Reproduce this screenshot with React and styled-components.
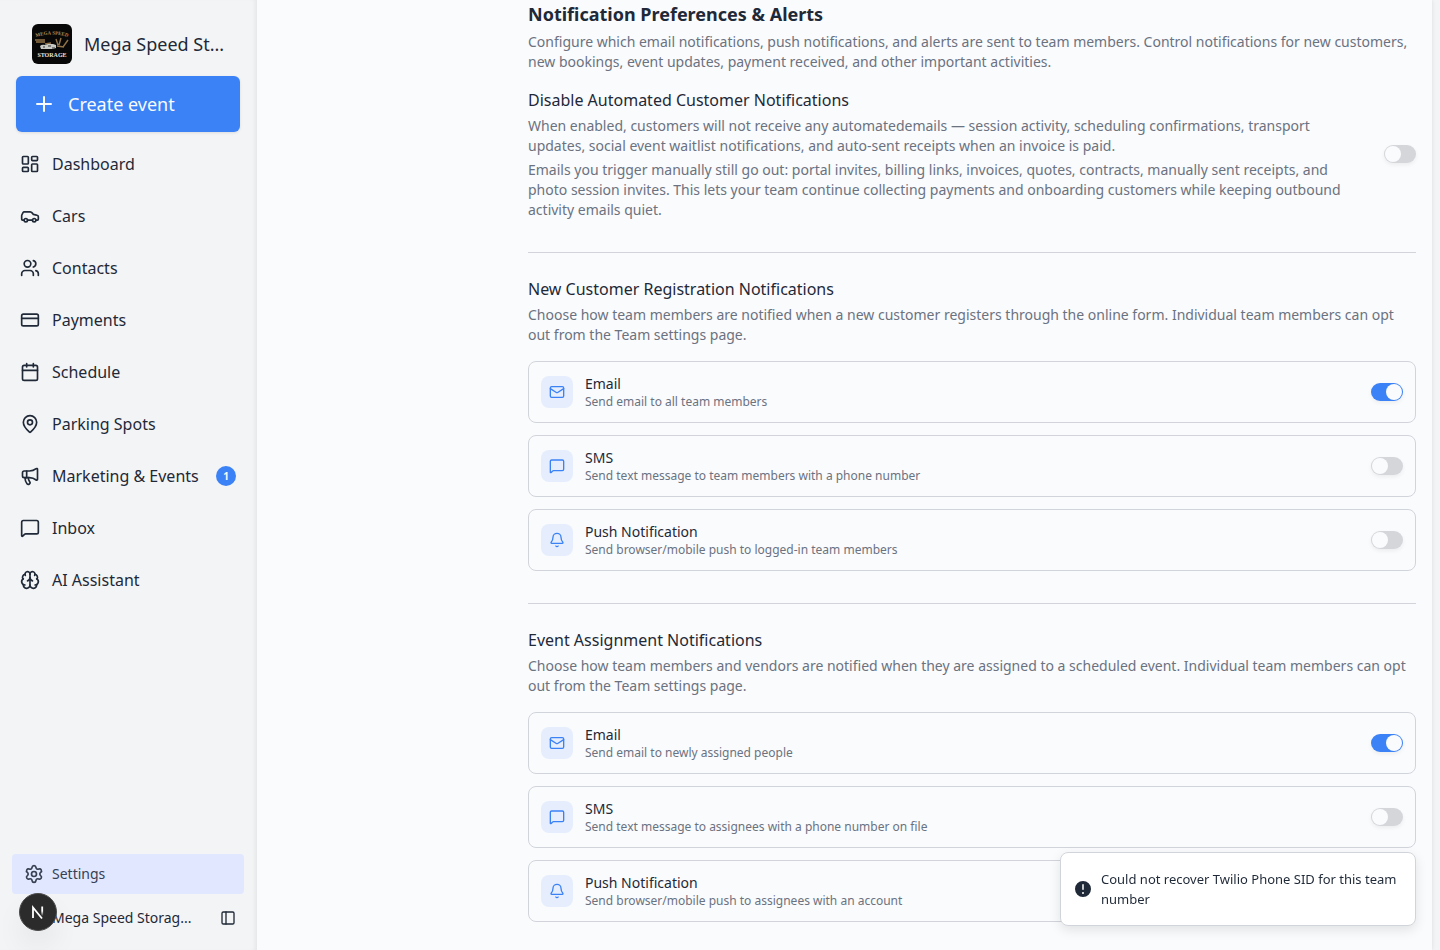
import styled, { createGlobalStyle } from "styled-components";
import { useId, useState } from "react";
import {
  Bell,
  Brain,
  Calendar,
  Car,
  CreditCard,
  LayoutDashboard,
  Mail,
  MapPin,
  Megaphone,
  MessageSquare,
  PanelLeft,
  Plus,
  Settings,
  Users,
} from "lucide-react";

const GlobalStyle = createGlobalStyle`
  *, *::before, *::after {
    box-sizing: border-box;
  }
  body {
    margin: 0;
    background: #f3f4f6;
    color: #1f2937;
    font-family: "Noto Sans", sans-serif;
    font-size: 14px;
    line-height: 20px;
  }
  h2, h3, p {
    margin: 0;
  }
  a {
    color: inherit;
    text-decoration: none;
  }
  button {
    font-family: inherit;
    cursor: pointer;
  }
`;

const Layout = styled.div`
  display: flex;
  align-items: flex-start;
  min-height: 100vh;
  padding-right: 8px;
`;

const Sidebar = styled.aside`
  position: sticky;
  top: 0;
  display: flex;
  flex-direction: column;
  flex: none;
  width: 257px;
  height: 100vh;
  padding-top: 24px;
  background: #f3f4f6;
  box-shadow: inset -4px 0 4px -2px rgba(0, 0, 0, 0.06);
`;

const Brand = styled.div`
  display: flex;
  align-items: center;
  gap: 12px;
  padding: 0 24px 0 32px;

  svg {
    flex: none;
  }
`;

const BrandName = styled.span`
  font-size: 18px;
  line-height: 28px;
  white-space: nowrap;
`;

const CreateButton = styled.button`
  display: flex;
  flex: none;
  align-items: center;
  gap: 12px;
  height: 56px;
  margin: 12px 17px 12px 16px;
  padding: 0 16px;
  border: none;
  border-radius: 6px;
  background: #3b82f6;
  color: #f8fafc;
  font-size: 18px;
  line-height: 28px;
  box-shadow: 0 1px 3px rgba(0, 0, 0, 0.1);
`;

const Nav = styled.nav`
  display: flex;
  flex-direction: column;
  gap: 12px;
  padding: 0 13px 0 12px;
`;

const NavLink = styled.a`
  display: flex;
  align-items: center;
  gap: 12px;
  height: 40px;
  padding: 0 8px;
  border-radius: 6px;
  font-size: 16px;
`;

const Badge = styled.span`
  width: 20px;
  height: 20px;
  margin-left: auto;
  border-radius: 50%;
  background: #3b82f6;
  color: #f8fafc;
  font-size: 10px;
  font-weight: 700;
  line-height: 20px;
  text-align: center;
`;

const SidebarFooter = styled.div`
  margin-top: auto;
  padding: 0 13px 8px 12px;
`;

const SettingsLink = styled.a`
  display: flex;
  align-items: center;
  gap: 8px;
  height: 40px;
  padding: 0 12px;
  border-radius: 4px;
  background: #e0e7ff;
  color: #374151;
`;

const Account = styled.div`
  display: flex;
  align-items: center;
  justify-content: space-between;
  height: 48px;
  padding: 0 8px 0 40px;
`;

const AccountName = styled.span`
  white-space: nowrap;
`;

const IconButton = styled.button`
  display: flex;
  padding: 0;
  border: none;
  background: none;
  color: #1f2937;
`;

const DevButton = styled.button`
  position: fixed;
  bottom: 19px;
  left: 19px;
  display: flex;
  align-items: center;
  justify-content: center;
  width: 38px;
  height: 38px;
  padding: 0;
  border: 1px solid #4a4a4a;
  border-radius: 50%;
  background: #2b2b2b;
  box-shadow: 0 16px 32px -8px rgba(0, 0, 0, 0.16);
`;

const Main = styled.main`
  flex: 1;
  min-width: 0;
  min-height: 100vh;
  padding: 0 16px 28px 271px;
  background: #fafbfd;
  box-shadow: 0 0 4px rgba(0, 0, 0, 0.1);
`;

const Title = styled.h2`
  margin-bottom: 4px;
  font-size: 18px;
  font-weight: 700;
  line-height: 28px;
`;

const Heading = styled.h3`
  margin-bottom: 4px;
  font-size: 16px;
  font-weight: 400;
  line-height: 24px;
`;

const Text = styled.p`
  color: #6b7280;

  & + & {
    margin-top: 4px;
  }
`;

const DisableRow = styled.div`
  display: flex;
  align-items: center;
  justify-content: space-between;
  gap: 16px;
  margin-top: 16px;
`;

const Section = styled.section`
  margin-top: 32px;
  padding-top: 24px;
  border-top: 1px solid #d1d5db;
`;

const Options = styled.div`
  display: flex;
  flex-direction: column;
  gap: 12px;
  margin-top: 16px;
`;

const Option = styled.div`
  display: flex;
  align-items: center;
  gap: 12px;
  padding: 12px;
  border: 1px solid #d1d5db;
  border-radius: 8px;
`;

const OptionIcon = styled.span`
  display: flex;
  align-items: center;
  justify-content: center;
  width: 32px;
  height: 32px;
  border-radius: 8px;
  background: #e6eefd;
  color: #3b82f6;
`;

const OptionLabel = styled.label`
  flex: 1;
`;

const OptionHint = styled.span`
  display: block;
  color: #6b7280;
  font-size: 12px;
  line-height: 16px;
`;

const Switch = styled.input`
  flex: none;
  width: 32px;
  height: 18px;
  margin: 0;
  padding: 1px;
  border-radius: 9px;
  background: #d4d6da;
  box-shadow: 0 2px 4px rgba(0, 0, 0, 0.06);
  appearance: none;
  cursor: pointer;

  &::before {
    content: "";
    display: block;
    width: 16px;
    height: 16px;
    border-radius: 50%;
    background: #fafbfd;
  }

  &:checked {
    background: #3b82f6;
  }

  &:checked::before {
    margin-left: auto;
  }
`;

const Toast = styled.div`
  position: fixed;
  right: 24px;
  bottom: 24px;
  display: flex;
  align-items: center;
  gap: 8px;
  width: 356px;
  padding: 16px 12px;
  border: 1px solid #d1d5db;
  border-radius: 8px;
  background: #fff;
  font-size: 13px;
  box-shadow: 0 4px 12px rgba(0, 0, 0, 0.1);

  svg {
    flex: none;
  }
`;

const links = [
  { name: "Dashboard", icon: LayoutDashboard },
  { name: "Cars", icon: Car },
  { name: "Contacts", icon: Users },
  { name: "Payments", icon: CreditCard },
  { name: "Schedule", icon: Calendar },
  { name: "Parking Spots", icon: MapPin },
  { name: "Marketing & Events", icon: Megaphone, count: 1 },
  { name: "Inbox", icon: MessageSquare },
  { name: "AI Assistant", icon: Brain },
];

const sections = [
  {
    title: "New Customer Registration Notifications",
    text: "Choose how team members are notified when a new customer registers through the online form. Individual team members can opt out from the Team settings page.",
    options: [
      { name: "Email", icon: Mail, on: true, hint: "Send email to all team members" },
      { name: "SMS", icon: MessageSquare, hint: "Send text message to team members with a phone number" },
      { name: "Push Notification", icon: Bell, hint: "Send browser/mobile push to logged-in team members" },
    ],
  },
  {
    title: "Event Assignment Notifications",
    text: "Choose how team members and vendors are notified when they are assigned to a scheduled event. Individual team members can opt out from the Team settings page.",
    options: [
      { name: "Email", icon: Mail, on: true, hint: "Send email to newly assigned people" },
      { name: "SMS", icon: MessageSquare, hint: "Send text message to assignees with a phone number on file" },
      { name: "Push Notification", icon: Bell, hint: "Send browser/mobile push to assignees with an account" },
    ],
  },
];

const Logo = () => (
  <svg width="40" height="40" viewBox="0 0 40 40" aria-hidden="true">
    <rect width="40" height="40" rx="6" fill="#080808" />
    <path id="arc" d="M1 14Q20 7 39 14" fill="none" />
    <text fill="#b08d57" fontFamily="Liberation Serif, serif" fontSize="5" fontWeight="700">
      <textPath href="#arc" startOffset="50%" textAnchor="middle">
        MEGA SPEED
      </textPath>
    </text>
    <path d="M3 16h10M4 18h9M13 20l6-1M24 15l2 6M29 14l-2 7M36 16l-5 7M25 22l7 1" stroke="#927347" strokeWidth="1.4" fill="none" />
    <path d="M8 22q2-2 5-1l3-1h5l3 1v3l-3 1H9z" fill="#c9c9c4" />
    <path d="M11 23h2M16 22h3M20 24h3" stroke="#333" strokeWidth="1" />
    <text x="20" y="33" fill="#e5e5e0" fontFamily="Liberation Serif, serif" fontSize="6" fontWeight="700" textAnchor="middle">
      STORAGE
    </text>
  </svg>
);

const NextMark = () => (
  <svg width="16" height="16" viewBox="0 0 16 16" fill="none" aria-hidden="true">
    <defs>
      <linearGradient id="leg" x1="0" y1="2" x2="0" y2="12" gradientUnits="userSpaceOnUse">
        <stop offset="0.5" stopColor="#fff" />
        <stop offset="1" stopColor="#fff" stopOpacity="0" />
      </linearGradient>
    </defs>
    <path d="M3 14V3.5l9 11" stroke="#fff" strokeWidth="1.8" />
    <path d="M12.2 2.5v9.5" stroke="url(#leg)" strokeWidth="1.8" />
  </svg>
);

const ChannelOption = ({ option }) => {
  const [checked, setChecked] = useState(Boolean(option.on));
  const id = useId();
  const Icon = option.icon;

  return (
    <Option>
      <OptionIcon>
        <Icon size={16} />
      </OptionIcon>
      <OptionLabel htmlFor={id}>
        {option.name}
        <OptionHint>{option.hint}</OptionHint>
      </OptionLabel>
      <Switch id={id} type="checkbox" checked={checked} onChange={(e) => setChecked(e.target.checked)} />
    </Option>
  );
};

const App = () => {
  const [disabled, setDisabled] = useState(false);

  return (
    <>
      <GlobalStyle />
      <Layout>
        <Sidebar>
          <Brand>
            <Logo />
            <BrandName>Mega Speed St...</BrandName>
          </Brand>
          <CreateButton type="button">
            <Plus size={24} />
            Create event
          </CreateButton>
          <Nav>
            {links.map(({ name, icon: Icon, count }) => (
              <NavLink href="#" key={name}>
                <Icon size={20} />
                {name}
                {count && <Badge>{count}</Badge>}
              </NavLink>
            ))}
          </Nav>
          <SidebarFooter>
            <SettingsLink href="#">
              <Settings size={20} />
              Settings
            </SettingsLink>
            <Account>
              <AccountName>Mega Speed Storag...</AccountName>
              <IconButton type="button" aria-label="Toggle sidebar">
                <PanelLeft size={16} />
              </IconButton>
            </Account>
          </SidebarFooter>
        </Sidebar>
        <Main>
          <Title>Notification Preferences &amp; Alerts</Title>
          <Text>
            Configure which email notifications, push notifications, and alerts are sent to team members. Control
            notifications for new customers, new bookings, event updates, payment received, and other important
            activities.
          </Text>
          <DisableRow>
            <div>
              <Heading>
                <label htmlFor="disable-automated">Disable Automated Customer Notifications</label>
              </Heading>
              <Text>
                When enabled, customers will not receive any automatedemails — session activity, scheduling
                confirmations, transport updates, social event waitlist notifications, and auto-sent receipts when an
                invoice is paid.
              </Text>
              <Text>
                Emails you trigger manually still go out: portal invites, billing links, invoices, quotes, contracts,
                manually sent receipts, and photo session invites. This lets your team continue collecting payments and
                onboarding customers while keeping outbound activity emails quiet.
              </Text>
            </div>
            <Switch
              id="disable-automated"
              type="checkbox"
              checked={disabled}
              onChange={(e) => setDisabled(e.target.checked)}
            />
          </DisableRow>
          {sections.map((section) => (
            <Section key={section.title}>
              <Heading>{section.title}</Heading>
              <Text>{section.text}</Text>
              <Options>
                {section.options.map((option) => (
                  <ChannelOption key={option.name} option={option} />
                ))}
              </Options>
            </Section>
          ))}
        </Main>
      </Layout>
      <DevButton type="button" aria-label="Open dev tools">
        <NextMark />
      </DevButton>
      <Toast role="status">
        <svg width="20" height="20" viewBox="0 0 20 20" fill="currentColor" aria-hidden="true">
          <path
            fillRule="evenodd"
            clipRule="evenodd"
            d="M18 10a8 8 0 11-16 0 8 8 0 0116 0zm-8-5a.75.75 0 01.75.75v4.5a.75.75 0 01-1.5 0v-4.5A.75.75 0 0110 5zm0 10a1 1 0 100-2 1 1 0 000 2z"
          />
        </svg>
        Could not recover Twilio Phone SID for this team number
      </Toast>
    </>
  );
};

export default App;
